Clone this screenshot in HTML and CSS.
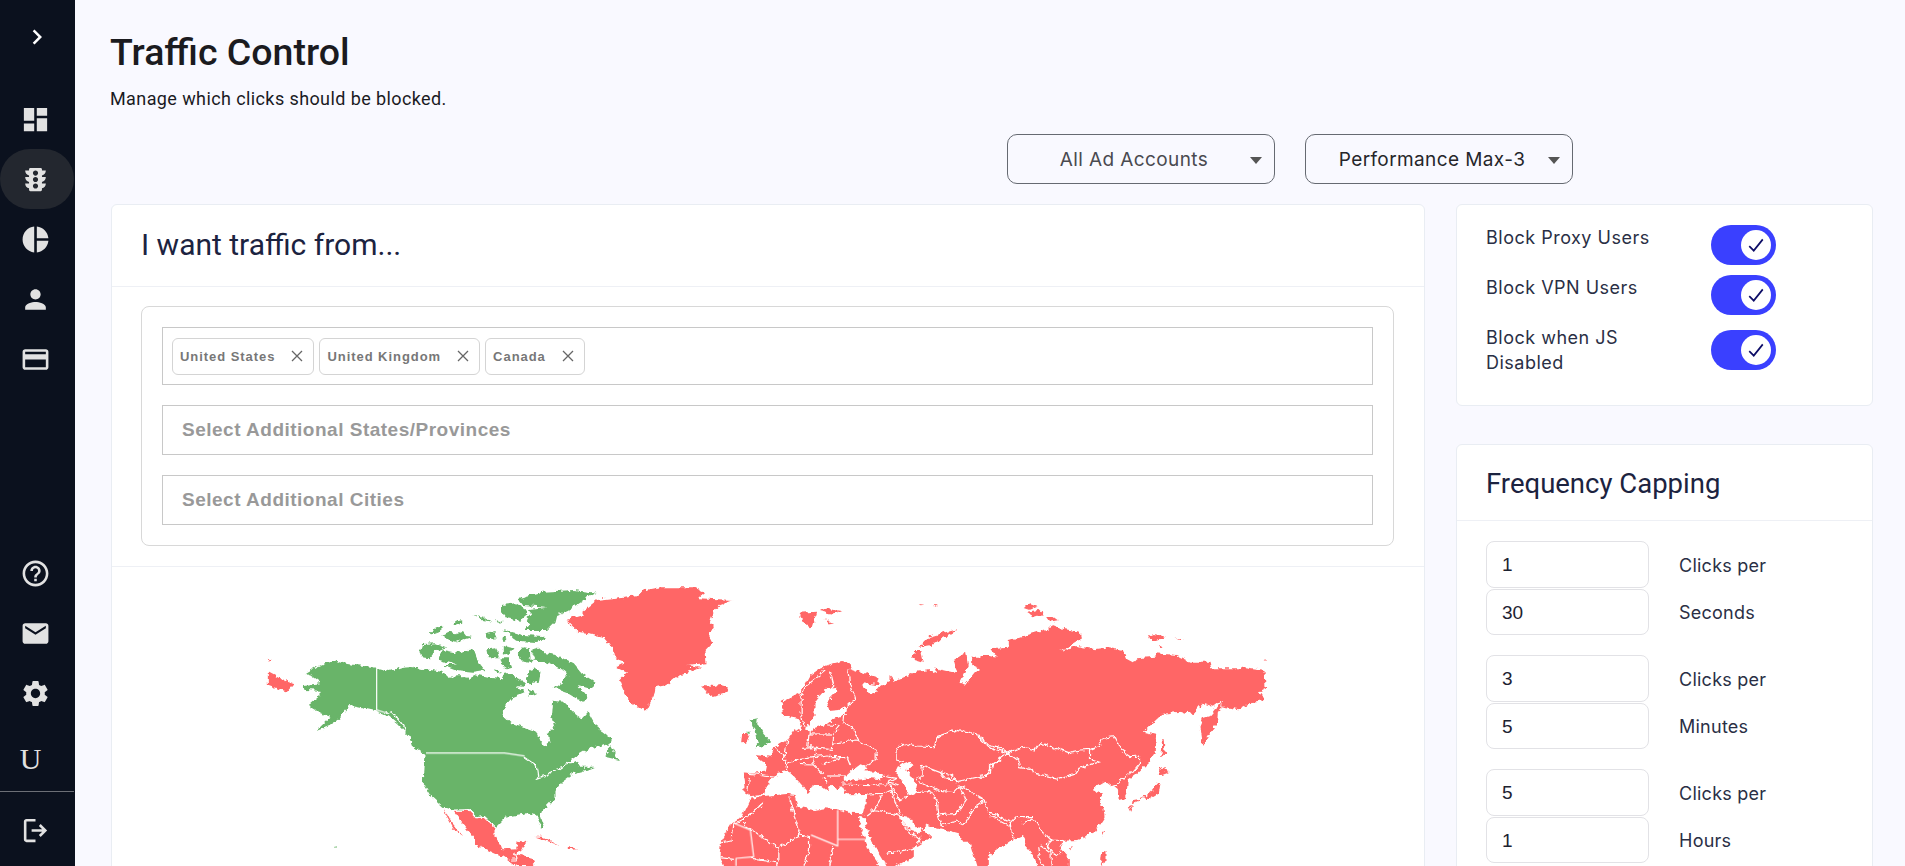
FILE: index.html
```html
<!DOCTYPE html>
<html lang="en">
<head>
<meta charset="utf-8">
<title>Traffic Control</title>
<link rel="stylesheet" href="styles.css">
</head>
<body>
<div class="app">
  <nav class="sidebar">
    <div class="nav-toggle"><svg class="icon chevron" viewBox="0 0 24 24"><path d="M8.59 16.59L13.17 12 8.59 7.41 10 6l6 6-6 6z"/></svg></div>
    <div class="nav-item"><svg class="icon" viewBox="0 0 24 24"><path d="M3 13h8V3H3v10zm0 8h8v-6H3v6zm10 0h8V11h-8v10zm0-18v6h8V3h-8z"/></svg></div>
    <div class="nav-item active"><svg class="icon" viewBox="0 0 24 24"><path d="M20 10h-3V8.86c1.72-.45 3-2 3-3.86h-3V4c0-.55-.45-1-1-1H8c-.55 0-1 .45-1 1v1H4c0 1.86 1.28 3.41 3 3.86V10H4c0 1.86 1.28 3.41 3 3.86V15H4c0 1.86 1.28 3.41 3 3.86V20c0 .55.45 1 1 1h8c.55 0 1-.45 1-1v-1.14c1.72-.45 3-2 3-3.86h-3v-1.14c1.72-.45 3-2 3-3.86zm-8 9c-1.11 0-2-.9-2-2s.89-2 2-2c1.1 0 2 .9 2 2s-.89 2-2 2zm0-5c-1.11 0-2-.9-2-2s.89-2 2-2c1.1 0 2 .9 2 2s-.89 2-2 2zm0-5c-1.11 0-2-.9-2-2 0-1.11.89-2 2-2 1.1 0 2 .89 2 2 0 1.1-.89 2-2 2z"/></svg></div>
    <div class="nav-item"><svg class="icon" viewBox="0 0 24 24"><path d="M11 2v20c-5.07-.5-9-4.79-9-10s3.93-9.5 9-10zm2.03 0v8.99H22c-.47-4.74-4.24-8.52-8.97-8.99zm0 11.01V22c4.74-.47 8.5-4.25 8.97-8.99h-8.97z"/></svg></div>
    <div class="nav-item"><svg class="icon" viewBox="0 0 24 24"><path d="M12 12c2.21 0 4-1.79 4-4s-1.79-4-4-4-4 1.79-4 4 1.79 4 4 4zm0 2c-2.67 0-8 1.34-8 4v2h16v-2c0-2.66-5.33-4-8-4z"/></svg></div>
    <div class="nav-item"><svg class="icon" viewBox="0 0 24 24"><path d="M20 4H4c-1.11 0-1.99.89-1.99 2L2 18c0 1.11.89 2 2 2h16c1.11 0 2-.89 2-2V6c0-1.11-.89-2-2-2zm0 14H4v-6h16v6zm0-10H4V6h16v2z"/></svg></div>
    <div class="nav-bottom">
      <div class="nav-item"><svg class="icon" viewBox="0 0 24 24"><path d="M11 18h2v-2h-2v2zm1-16C6.48 2 2 6.48 2 12s4.48 10 10 10 10-4.48 10-10S17.52 2 12 2zm0 18c-4.41 0-8-3.59-8-8s3.59-8 8-8 8 3.59 8 8-3.59 8-8 8zm0-14c-2.21 0-4 1.79-4 4h2c0-1.1.9-2 2-2s2 .9 2 2c0 2-3 1.75-3 5h2c0-2.25 3-2.5 3-5 0-2.21-1.79-4-4-4z"/></svg></div>
      <div class="nav-item"><svg class="icon" viewBox="0 0 24 24"><path d="M20 4H4c-1.1 0-1.99.9-1.99 2L2 18c0 1.1.9 2 2 2h16c1.1 0 2-.9 2-2V6c0-1.1-.9-2-2-2zm0 4l-8 5-8-5V6l8 5 8-5v2z"/></svg></div>
      <div class="nav-item"><svg class="icon" viewBox="0 0 24 24"><path d="M19.14 12.94c.04-.3.06-.61.06-.94 0-.32-.02-.64-.07-.94l2.03-1.58c.18-.14.23-.41.12-.61l-1.92-3.32c-.12-.22-.37-.29-.59-.22l-2.39.96c-.5-.38-1.03-.7-1.62-.94l-.36-2.54c-.04-.24-.24-.41-.48-.41h-3.84c-.24 0-.43.17-.47.41l-.36 2.54c-.59.24-1.13.57-1.62.94l-2.39-.96c-.22-.08-.47 0-.59.22L2.74 8.87c-.12.21-.08.47.12.61l2.03 1.58c-.05.3-.09.63-.09.94s.02.64.07.94l-2.03 1.58c-.18.14-.23.41-.12.61l1.92 3.32c.12.22.37.29.59.22l2.39-.96c.5.38 1.03.7 1.62.94l.36 2.54c.05.24.24.41.48.41h3.84c.24 0 .44-.17.47-.41l.36-2.54c.59-.24 1.13-.56 1.62-.94l2.39.96c.22.08.47 0 .59-.22l1.92-3.32c.12-.22.07-.47-.12-.61l-2.01-1.58zM12 15.6c-1.98 0-3.6-1.62-3.6-3.6s1.62-3.6 3.6-3.6 3.6 1.62 3.6 3.6-1.62 3.6-3.6 3.6z"/></svg></div>
      <div class="nav-user">U</div>
      <div class="nav-divider"></div>
      <div class="nav-item"><svg class="icon" viewBox="0 0 24 24"><path d="M5 21c-.55 0-1.02-.2-1.41-.59A1.93 1.93 0 0 1 3 19V5c0-.55.2-1.02.59-1.41C3.98 3.2 4.45 3 5 3h7v2H5v14h7v2H5zm11-4l-1.38-1.45L17.18 13H9v-2h8.18l-2.56-2.55L16 7l5 5-5 5z"/></svg></div>
    </div>
  </nav>

  <main class="main">
    <h1 class="page-title">Traffic Control</h1>
    <p class="page-sub">Manage which clicks should be blocked.</p>
    <div class="filters">
      <div class="select muted">All Ad Accounts<span class="caret"></span></div>
      <div class="select">Performance Max-3<span class="caret"></span></div>
    </div>
    <div class="columns">
      <section class="card card-main">
        <h2 class="card-title">I want traffic from...</h2>
        <div class="geo-wrap">
          <div class="geo-box">
            <div class="field chips">
              <span class="chip">United States<svg class="chip-x" viewBox="0 0 12 12"><path d="M1 1l10 10M11 1L1 11"/></svg></span>
              <span class="chip">United Kingdom<svg class="chip-x" viewBox="0 0 12 12"><path d="M1 1l10 10M11 1L1 11"/></svg></span>
              <span class="chip">Canada<svg class="chip-x" viewBox="0 0 12 12"><path d="M1 1l10 10M11 1L1 11"/></svg></span>
            </div>
            <div class="field placeholder">Select Additional States/Provinces</div>
            <div class="field placeholder">Select Additional Cities</div>
          </div>
        </div>
        <svg class="map" viewBox="111 567 1313 299" width="1313" height="299">
          <defs>
            <filter id="rough" filterUnits="userSpaceOnUse" x="111" y="567" width="1313" height="299">
              <feTurbulence type="turbulence" baseFrequency="0.13" numOctaves="2" seed="4" result="n"/>
              <feDisplacementMap in="SourceGraphic" in2="n" scale="5" xChannelSelector="R" yChannelSelector="G"/>
            </filter>
          </defs>
          <g filter="url(#rough)">
          <g transform="translate(-2.5 -1)">
          <!-- North America, traced at 3x from (240,570) -->
          <g transform="translate(240 570) scale(.33333)">
            <polygon class="green" points="200,308 230,290 280,270 320,282 405,292 450,303 490,290 520,288 545,296 610,305 625,320 680,318 690,330 700,312 730,318 790,325 800,305 840,330 860,335 850,350 830,348 855,365 820,380 795,410 792,435 815,458 890,485 900,510 915,527 930,515 925,490 945,470 935,435 938,392 970,395 1005,430 1025,445 1043,425 1065,465 1115,505 1110,522 1050,535 1000,565 975,590 1010,570 1020,590 1065,590 1040,600 1000,610 965,635 945,660 945,685 910,720 900,735 912,770 905,775 890,735 860,730 800,740 770,770 735,738 715,742 690,718 640,720 608,710 575,680 550,640 552,590 555,555 520,530 510,500 490,480 470,460 440,435 405,420 350,408 330,405 310,430 300,445 270,465 230,480 270,440 240,430 230,420 205,405 240,375 240,362 195,360 190,345 245,340 225,325"/>
            <polygon class="green" points="1095,560 1112,525 1138,570"/>
            <polygon class="green" points="835,85 910,65 1000,60 1068,68 1030,90 985,120 950,135 945,155 920,180 850,180 875,165 860,145 875,130 865,118 918,110 850,105"/>
            <polygon class="green" points="785,105 830,100 860,120 860,135 840,152 800,145 782,120"/>
            <polygon class="green" points="705,135 735,140 755,155 730,150"/>
            <polygon class="green" points="770,150 790,155 775,158"/>
            <polygon class="green" points="640,155 665,148 665,158 645,165"/>
            <polygon class="green" points="570,188 590,172 615,170 600,182 580,190"/>
            <polygon class="green" points="605,195 625,185 650,190 670,182 680,195 700,197 675,205 650,215 625,208"/>
            <polygon class="green" points="735,190 765,183 770,205 745,207"/>
            <polygon class="green" points="785,178 805,180 820,185 810,190"/>
            <polygon class="green" points="785,203 800,205 800,212 790,212"/>
            <polygon class="green" points="815,185 850,195 910,198 918,210 890,216 830,212 815,200"/>
            <polygon class="green" points="548,222 590,220 620,232 585,245 570,265 545,262 540,245"/>
            <polygon class="green" points="595,262 610,240 650,248 700,238 712,270 735,300 700,305 650,300 610,285 650,285 600,270"/>
            <polygon class="green" points="740,235 770,232 778,262 745,262"/>
            <polygon class="green" points="790,225 825,232 805,255 790,250"/>
            <polygon class="green" points="835,250 850,232 868,235 870,265 885,270 872,240 900,232 915,250 950,255 1000,280 1025,310 1067,340 1050,355 1015,345 1045,380 1030,395 980,365 950,355 935,360 970,335 985,310 975,300 930,280 890,272 870,275 840,270"/>
            <polygon class="green" points="885,295 900,305 895,335 870,340 860,320 870,300"/>
            <polygon class="green" points="780,265 805,265 815,290 800,295 785,285"/>
            <polygon class="green" points="760,298 785,305 770,310"/>
            <polygon class="green" points="865,355 895,370 870,380"/>
            <polygon class="green" points="285,827 291,827 291,831 285,831"/>
            <polyline class="line" points="440,430 455,425 490,465 500,490"/>
            <polyline class="line" points="850,558 890,585 895,620 890,625 920,615 930,605 960,595 990,575 1015,570 1020,590"/>
            <polygon class="red" points="1205,62 1260,52 1360,52 1395,68 1375,85 1480,90 1440,105 1420,125 1408,160 1425,175 1405,190 1418,215 1395,240 1398,280 1340,285 1385,290 1310,320 1280,345 1245,352 1240,380 1218,422 1195,410 1170,395 1150,360 1138,330 1160,305 1128,290 1155,275 1125,265 1120,235 1090,200 1020,188 980,150 1030,135 1025,125 1070,90 1200,75"/>
            <polygon class="red" points="1385,345 1405,352 1440,345 1465,352 1460,365 1420,378 1400,365"/>
            <polygon class="red" points="85,306 120,325 162,340 140,365 85,345"/>
            <polygon class="red" points="85,266 100,268 88,272"/>
            <polygon class="red" points="640,722 690,722 712,745 735,742 765,772 765,800 790,838 830,835 835,812 858,815 845,840 825,850 880,865 885,888 830,888 790,860 710,825 705,805 660,750"/>
            <polygon class="red" points="612,715 630,750 668,795 640,775 620,740"/>
            <polygon class="red" points="885,800 910,800 960,825 930,815"/>
            <polygon class="red" points="985,828 1010,838 985,840"/>
            <polyline class="line" points="610,712 640,720 690,720 712,743 735,740 767,772"/>
            <polyline class="line" points="825,850 830,870 815,870"/>
          </g>
          <!-- Europe, Africa, Middle East, traced at 3x from (700,660) -->
          <g transform="translate(700 660) scale(.33333)">
            <polygon class="red" points="380,30 310,80 300,100 247,125 250,165 275,170 300,175 280,210 260,240 225,262 215,290 165,285 200,312 195,335 130,340 135,380 128,392 155,408 150,420 125,470 95,490 65,540 60,590 75,630 1020,630 1020,100 450,100"/>
          </g>
          <!-- Northern Russia, traced at 3x from (800,590) -->
          <g transform="translate(800 590) scale(.33333)">
            <polygon class="red" points="100,220 130,213 155,225 150,235 240,265 235,285 185,280 205,310 220,315 240,290 270,275 270,255 285,272 350,245 395,240 410,250 405,235 470,250 460,210 500,185 505,225 480,275 500,282 530,245 548,240 515,225 515,200 590,200 575,175 625,170 630,150 750,115 750,450 0,450 0,310 30,255 60,235"/>
            <polygon class="red" points="360,170 390,140 470,118 465,125 395,165"/>
            <polygon class="red" points="345,180 362,180 370,215 335,205"/>
            <polygon class="red" points="0,68 50,65 35,115 15,100 0,80"/>
            <polygon class="red" points="58,62 90,55 125,60 100,72"/>
            <polygon class="red" points="75,88 100,100 90,103"/>
            <polygon class="red" points="355,42 372,44 360,46"/>
            <polygon class="red" points="398,45 412,46 405,50"/>
          </g>
          <!-- East Asia, traced at 3x from (980,590) -->
          <g transform="translate(980 590) scale(.33333)">
            <polygon class="red" points="0,195 30,195 52,200 33,178 85,170 85,150 150,135 195,125 215,105 240,115 300,125 305,145 245,182 290,168 345,178 390,172 430,180 440,205 460,215 470,205 525,200 530,190 590,195 630,215 690,215 695,235 780,235 785,230 855,240 858,295 838,305 855,330 820,335 780,358 728,350 730,328 700,350 668,340 640,372 600,365 545,372 490,425 530,435 525,490 505,520 470,552 445,570 442,610 435,625 415,630 412,600 400,590 375,572 345,590 340,598 370,610 358,630 372,655 375,680 345,725 290,750 250,752 240,770 268,800 268,840 175,840 160,795 140,770 130,735 95,750 25,800 25,840 0,840"/>
            <polygon class="red" points="728,330 725,355 715,370 712,405 690,430 668,465 660,410 670,385 690,378 705,360"/>
            <polygon class="red" points="130,50 150,40 172,48 150,57"/>
            <polygon class="red" points="142,65 180,60 192,72 165,80"/>
            <polygon class="red" points="200,78 222,78 235,88 210,92"/>
            <polygon class="red" points="545,445 552,445 555,480 560,488 545,500 548,470"/>
            <polygon class="red" points="540,535 550,530 568,547 545,555 535,555"/>
            <polygon class="red" points="530,578 540,580 535,610 505,628 495,625 460,640 462,630 490,625 520,600"/>
            <polygon class="red" points="445,648 460,645 452,662"/>
            <polygon class="red" points="368,722 374,722 365,740"/>
            <polygon class="red" points="365,785 378,780 378,810 370,825 362,810"/>
            <polygon class="red" points="268,772 282,768 275,778"/>
            <polygon class="red" points="505,138 520,132 562,140 535,150 510,150"/>
            <polygon class="red" points="585,145 610,148 600,150"/>
            <polygon class="red" points="535,168 550,172 540,175"/>
            <polygon class="red" points="852,210 858,208 858,213"/>
            <polyline class="line" points="0,437 30,465 55,470 85,488 125,470 165,480 180,458 215,470 265,488 300,480 330,478 360,465 365,445 405,440 425,480 455,500 480,498 480,520 455,550 450,548"/>
            <polyline class="line" points="85,488 115,510 120,530 155,535 165,550 235,565 285,550 295,535 360,515 330,505 330,478"/>
            <polyline class="line" points="85,488 50,515 30,530 30,550 0,565"/>
            <polyline class="line" points="452,550 400,590"/>
            <polyline class="line" points="0,625 15,630 25,665 95,695 110,680 160,680 185,720 215,750 250,752"/>
            <polyline class="line" points="30,675 95,710 95,695"/>
            <polyline class="line" points="95,695 100,745"/>
            <polyline class="line" points="130,700 160,685"/>
            <polyline class="line" points="175,770 180,810 200,840"/>
            <polyline class="line" points="215,750 200,765 230,800 245,785"/>
            <polyline class="line" points="180,765 215,790 215,840"/>
          </g>
          <!-- Seas and borders over the western land -->
          <g transform="translate(700 660) scale(.33333)">
            <polygon class="sea" points="410,80 380,85 345,125 345,165 320,205 330,222 345,205 375,195 395,180 435,162 440,145 385,150 380,125 410,95"/>
            <polygon class="sea" points="275,190 300,178 305,205 290,215 280,210"/>
            <polygon class="sea" points="155,408 190,405 200,375 232,338 265,332 285,350 315,385 325,400 340,375 365,375 385,390 395,370 410,390 425,375 440,403 500,402 498,430 490,460 450,458 410,448 375,445 345,450 295,440 285,405 265,402 190,408 165,418"/>
            <polygon class="sea" points="430,350 460,325 480,310 505,320 495,330 545,340 550,358 510,355 470,360 430,365"/>
            <polygon class="sea" points="600,315 625,305 640,315 620,330 632,345 655,380 645,400 625,405 610,370 590,335"/>
            <polygon class="sea" points="475,470 495,475 510,530 570,630 550,630 510,575 490,520"/>
            <polygon class="sea" points="597,465 625,470 650,500 668,505 660,520 630,510 605,480"/>
            <polygon class="sea" points="570,630 640,590 640,565 695,530 670,508 680,495 720,505 775,520 790,545 810,545 835,630"/>
            <polygon class="red" points="10,75 45,78 85,85 50,105 30,100"/>
            <polygon class="green" points="157,178 172,175 170,190 185,205 195,225 212,243 195,258 165,262 180,245 170,235 165,205 158,195"/>
            <polygon class="green" points="140,215 152,215 150,222 140,220"/>
            <polygon class="red" points="125,222 145,222 150,225 140,248 122,250"/>
            <polyline class="line" points="375,32 320,75 305,105 305,160 315,200"/>
            <polyline class="line" points="390,35 400,75 380,100"/>
            <polyline class="line" points="445,25 450,70 465,115 435,145 430,185 460,205 475,240"/>
            <polyline class="line" points="380,195 420,197 400,222 395,270"/>
            <polyline class="line" points="325,222 395,222"/>
            <polyline class="line" points="325,222 322,260 390,265"/>
            <polyline class="line" points="395,250 470,240 530,268 530,295 495,318"/>
            <polyline class="line" points="390,290 440,290 450,315"/>
            <polyline class="line" points="265,235 255,295 262,330"/>
            <polyline class="line" points="225,260 260,290"/>
            <polyline class="line" points="262,310 300,295 340,290 390,285"/>
            <polyline class="line" points="305,265 350,262 345,290"/>
            <polyline class="line" points="340,290 340,310 370,340"/>
            <polyline class="line" points="300,310 340,312"/>
            <polyline class="line" points="370,312 430,290"/>
            <polyline class="line" points="380,345 430,345"/>
            <polyline class="line" points="370,350 385,370"/>
            <polyline class="line" points="130,338 220,348"/>
            <polyline class="line" points="150,352 145,395"/>
            <polyline class="line" points="425,372 565,375"/>
            <polyline class="line" points="565,360 575,385"/>
            <polyline class="line" points="500,402 550,400 580,385"/>
            <polyline class="line" points="545,345 590,352 565,365 595,375"/>
            <polyline class="line" points="590,265 610,250 650,258 705,260 712,230 775,208 830,222 870,262 925,280"/>
            <polyline class="line" points="590,265 590,300 610,305"/>
            <polyline class="line" points="668,315 720,335 755,345 770,365 860,345 875,320 925,280"/>
            <polyline class="line" points="668,315 668,355 650,350"/>
            <polyline class="line" points="650,360 710,390 760,395 775,380 800,375"/>
            <polyline class="line" points="720,335 730,350 770,365"/>
            <polyline class="line" points="580,385 600,420 650,395 690,392 710,420 715,465 725,495"/>
            <polyline class="line" points="710,465 770,460 800,415 775,380 800,385 820,400"/>
            <polyline class="line" points="725,495 770,480 790,495 825,440 855,420 830,405"/>
            <polyline class="line" points="550,400 520,450 500,465"/>
            <polyline class="line" points="575,390 600,460"/>
            <polyline class="line" points="510,450 530,450 595,465 630,520 665,535 640,565 590,575 560,580"/>
            <polyline class="line" points="190,430 130,480 100,490 95,540 65,545"/>
            <polyline class="line" points="270,410 285,470 300,525 235,565"/>
            <polyline class="line" points="300,525 330,530 330,570 310,630"/>
            <polyline class="line" points="400,558 385,630"/>
            <polyline class="line" points="130,490 235,565 235,630"/>
            <polyline class="line" points="158,595 200,600 235,610"/>
            <polyline class="line" points="60,590 100,595"/>
          </g>
          <g transform="translate(980 590) scale(.33333)">
            <polygon class="sea" points="25,842 25,800 95,750 130,735 140,770 160,795 175,842"/>
          </g>
          </g>
          </g>
          <!-- Straight borders stay sharp -->
          <g transform="translate(240 570) scale(.33333)">
            <polyline class="line" points="407,294 407,420 440,430"/>
            <polyline class="line" points="555,549 790,549 850,558"/>
          </g>
          <g transform="translate(700 660) scale(.33333)">
            <polyline class="line" points="410,450 410,558 330,525"/>
            <polyline class="line" points="410,538 505,538"/>
            <polyline class="line" points="100,490 148,510 158,590 105,595 105,618"/>
          </g>
        </svg>
      </section>

      <aside class="side">
        <section class="card toggles">
          <div class="toggle-row"><span class="toggle-label">Block Proxy Users</span><span class="toggle"><span class="knob"><svg viewBox="0 0 16 16"><path d="M2 9l4 4 8-10"/></svg></span></span></div>
          <div class="toggle-row"><span class="toggle-label">Block VPN Users</span><span class="toggle"><span class="knob"><svg viewBox="0 0 16 16"><path d="M2 9l4 4 8-10"/></svg></span></span></div>
          <div class="toggle-row centered"><span class="toggle-label">Block when JS Disabled</span><span class="toggle"><span class="knob"><svg viewBox="0 0 16 16"><path d="M2 9l4 4 8-10"/></svg></span></span></div>
        </section>
        <section class="card freq">
          <h2 class="freq-title">Frequency Capping</h2>
          <div class="freq-body">
            <div class="freq-group">
              <div class="freq-row"><div class="num">1</div><span class="freq-label">Clicks per</span></div>
              <div class="freq-row"><div class="num">30</div><span class="freq-label">Seconds</span></div>
            </div>
            <div class="freq-group">
              <div class="freq-row"><div class="num">3</div><span class="freq-label">Clicks per</span></div>
              <div class="freq-row"><div class="num">5</div><span class="freq-label">Minutes</span></div>
            </div>
            <div class="freq-group">
              <div class="freq-row"><div class="num">5</div><span class="freq-label">Clicks per</span></div>
              <div class="freq-row"><div class="num">1</div><span class="freq-label">Hours</span></div>
            </div>
          </div>
        </section>
      </aside>
    </div>
  </main>
</div>
</body>
</html>
```

FILE: styles.css
```css
* { box-sizing: border-box; }
html, body { margin: 0; height: 866px; overflow: hidden; }
body { background: #f9f9ff; font-family: Inter, "Liberation Sans", sans-serif; color: #1d1d1f; }
.app { display: flex; height: 866px; overflow: hidden; }

/* Sidebar */
.sidebar { width: 75px; flex: none; background: #0b111e; display: flex; flex-direction: column; padding-top: 7px; height: 866px; }
.nav-toggle { height: 60px; display: flex; align-items: center; justify-content: center; margin-bottom: 22px; padding-right: 2px; }
.nav-item { width: 74px; height: 60px; display: flex; align-items: center; justify-content: center; padding-right: 4px; border-radius: 30px; flex: none; }
.nav-item.active { background: #23272f; }
.icon { width: 31px; height: 31px; fill: #e2e2e2; display: block; }
.chevron { width: 30px; height: 30px; fill: #fff; }
.nav-bottom { margin-top: auto; display: flex; flex-direction: column; padding-bottom: 6px; }
.nav-user { height: 70px; width: 74px; padding: 2px 13px 0 0; display: flex; align-items: center; justify-content: center; font: 30px "Liberation Serif", serif; color: #e2e2e2; }
.nav-divider { height: 1px; width: 74px; background: #6c6f76; margin-bottom: 8px; margin-top: -2px; }

/* Main */
.main { flex: 1; min-width: 0; padding: 30px 32px 0 36px; }
.page-title { margin: 0 0 0 -1px; font: 500 37.5px/44px Roboto, sans-serif; color: #1b1b1f; }
.page-sub { margin: 13px 0 0 -1px; font: 400 18px/24px Roboto, sans-serif; letter-spacing: .4px; color: #1b1b1f; }
.filters { display: flex; gap: 30px; margin: 23px 0 0 896px; }
.select { position: relative; width: 268px; height: 50px; border: 1px solid #666a72; border-radius: 10px; display: flex; align-items: center; justify-content: center; padding-right: 14px; font-size: 19px; letter-spacing: .4px; color: #26262a; }
.select.muted { color: #4a4a50; }
.caret { position: absolute; right: 12px; top: 22px; width: 0; height: 0; border-left: 6px solid transparent; border-right: 6px solid transparent; border-top: 7px solid #555; }
.columns { display: flex; align-items: flex-start; gap: 31px; margin-top: 20px; }

.card { background: #fff; border: 1px solid #e9edf3; border-radius: 6px; }
.card-main { width: 1314px; flex: none; height: 700px; overflow: hidden; }
.card-title { margin: 0; height: 82px; padding: 0 29px 2px; display: flex; align-items: center; font: 400 30px/1 Roboto, sans-serif; color: #1c2340; border-bottom: 1px solid #eef0f5; }
.geo-wrap { padding: 19px 30px 20px 29px; border-bottom: 1px solid #eef0f5; }
.geo-box { border: 1px solid #d8d8d8; border-radius: 8px; padding: 20px; display: flex; flex-direction: column; gap: 20px; }
.field { border: 1px solid #c8c8c8; height: 50px; }
.chips { height: 58px; display: flex; align-items: center; gap: 5px; padding: 0 9px; }
.chip { height: 37px; display: flex; align-items: center; gap: 16px; padding: 0 10px 0 7px; border: 1px solid #d4d4d4; border-radius: 6px; font: 700 13px "Liberation Sans", sans-serif; letter-spacing: .95px; color: #777; }
.chip-x { width: 12px; height: 12px; fill: none; stroke: #666; stroke-width: 1.3; flex: none; }
.placeholder { display: flex; align-items: center; padding-left: 19px; font: 700 19px "Liberation Sans", sans-serif; letter-spacing: .5px; color: #999; }

/* Map */
.map { display: block; }
.map polygon, .map polyline { vector-effect: non-scaling-stroke; }
.red { fill: #ff6666; }
.green { fill: #69b469; }
.sea { fill: #fff; }
.line { fill: none; stroke: #fff; stroke-width: 1.2; stroke-linejoin: round; }

/* Right column */
.side { width: 417px; flex: none; display: flex; flex-direction: column; gap: 38px; }
.toggles { padding: 20px 29px 29px; display: flex; flex-direction: column; gap: 10px; height: 202px; }
.toggle-row { display: flex; align-items: flex-start; }
.toggle-row.centered { align-items: center; }
.toggle-label { width: 190px; margin-right: 35px; font-size: 18px; line-height: 25px; letter-spacing: .5px; color: #2a2f45; }
.toggle { width: 65px; height: 40px; flex: none; background: #3a40ff; border-radius: 20px; display: flex; align-items: center; justify-content: flex-end; padding-right: 5px; }
.knob { width: 30px; height: 30px; border-radius: 50%; background: #fff; display: flex; align-items: center; justify-content: center; }
.knob svg { width: 18px; height: 18px; fill: none; stroke: #0c0c66; stroke-width: 1.5; }
.freq { height: 500px; }
.freq-title { margin: 0; height: 76px; padding: 2px 29px 0; display: flex; align-items: center; font: 400 27.5px/1 Roboto, sans-serif; color: #1c2340; border-bottom: 1px solid #eef0f5; }
.freq-body { padding: 20px 29px; display: flex; flex-direction: column; gap: 20px; }
.freq-group { display: flex; flex-direction: column; gap: 1px; }
.freq-row { display: flex; align-items: center; }
.num { width: 163px; height: 46.5px; border: 1px solid #e2e2e6; border-radius: 8px; padding: 2px 0 0 15px; display: flex; align-items: center; font: 400 19px "Liberation Sans", sans-serif; color: #1d2230; }
.freq-label { margin-left: 30px; padding-top: 2px; font-size: 18px; letter-spacing: .25px; color: #2a2f45; }
```
